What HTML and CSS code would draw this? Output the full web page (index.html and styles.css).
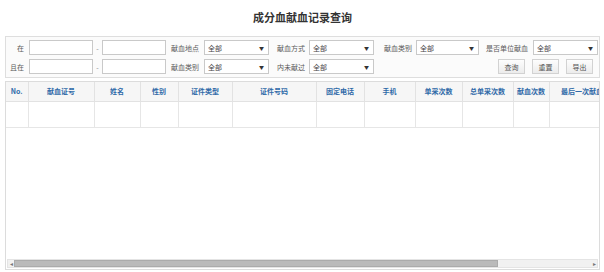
FILE: index.html
```html
<html lang="zh-CN">
<head>
    <meta charset="UTF-8">
    <title>成分血献血记录查询</title>
    <link rel="stylesheet" href="styles.css">
</head>
<body>

    <h2 class="title">成分血献血记录查询</h2>

    <!-- search form -->
    <div class="search">
        <div class="row">
            <span class="lbl first">在</span>
            <input type="text" class="date">
            <span class="dash">-</span>
            <input type="text" class="date">
            <span class="lbl l1">献血地点</span>
            <span class="sel"><select><option>全部</option></select></span>
            <span class="lbl l2">献血方式</span>
            <span class="sel"><select><option>全部</option></select></span>
            <span class="lbl l3">献血类别</span>
            <span class="sel s3"><select><option>全部</option></select></span>
            <span class="lbl l4">是否单位献血</span>
            <span class="sel"><select><option>全部</option></select></span>
        </div>
        <div class="row">
            <span class="lbl first">且在</span>
            <input type="text" class="date">
            <span class="dash">-</span>
            <input type="text" class="date">
            <span class="lbl l1">献血类别</span>
            <span class="sel"><select><option>全部</option></select></span>
            <span class="lbl l2">内未献过</span>
            <span class="sel"><select><option>全部</option></select></span>
            <div class="btns">
                <button>查询</button>
                <button>重置</button>
                <button>导出</button>
            </div>
        </div>
    </div>

    <!-- result grid -->
    <div class="grid">
        <div class="view">
            <table>
                <tr>
                    <th style="width:22px">No.</th>
                    <th style="width:66px">献血证号</th>
                    <th style="width:46px">姓名</th>
                    <th style="width:38px">性别</th>
                    <th style="width:54px">证件类型</th>
                    <th style="width:84px">证件号码</th>
                    <th style="width:48px">固定电话</th>
                    <th style="width:51px">手机</th>
                    <th style="width:47px">单采次数</th>
                    <th style="width:51px">总单采次数</th>
                    <th style="width:36px">献血次数</th>
                    <th style="width:80px">最后一次献血时间</th>
                    <th style="width:70px">备注</th>
                </tr>
                <tr>
                    <td></td><td></td><td></td><td></td><td></td><td></td><td></td>
                    <td></td><td></td><td></td><td></td><td></td><td></td>
                </tr>
            </table>
        </div>
        <div class="hbar">
            <span class="arrow">◂</span>
            <div class="track"><div class="thumb"></div></div>
            <span class="arrow">▸</span>
        </div>
    </div>

</body>
</html>
```

FILE: styles.css
```css
* {
    font-family: "Noto Sans CJK SC", "Liberation Sans", sans-serif;
    box-sizing: border-box;
}

body {
    margin: 0;
    padding: 0 4px 0 5px;
    background: #fff;
    color: #555;
}

.title {
    margin: 0;
    height: 36px;
    line-height: 34px;
    text-align: center;
    font-size: 11px;
    font-weight: bold;
    color: #333;
}

.search {
    border: 1px solid #dedede;
    background: #fbfbfb;
    padding: 1px 0 1px 1px;
    width: 595px;
}

.row {
    display: flex;
    align-items: center;
    height: 19px;
}

.lbl {
    font-size: 7px;
    color: #5a5a5a;
    white-space: nowrap;
}

.first {
    width: 22px;
    text-align: right;
    padding-right: 5px;
}

.l1 { width: 38px; padding-left: 5px; }
.l2 { width: 40px; padding-left: 8px; }
.l3 { width: 42px; padding-left: 10px; }
.l4 { width: 54px; padding-left: 7px; }

input.date {
    width: 64px;
    height: 15px;
    border: 1px solid #c9c9c9;
    background: #fff;
    padding: 0;
}

.dash {
    width: 9px;
    text-align: center;
    font-size: 7px;
    color: #888;
}

.sel {
    position: relative;
    width: 65px;
    height: 15px;
}

.s3 {
    width: 63px;
}

.sel select {
    appearance: none;
    -webkit-appearance: none;
    width: 100%;
    height: 15px;
    border: 1px solid #c9c9c9;
    background: #fff;
    font-size: 7px;
    color: #444;
    padding: 0 0 0 3px;
    border-radius: 0;
}

.sel::after {
    content: "▼";
    position: absolute;
    right: 5px;
    top: 4px;
    font-size: 5px;
    color: #333;
    pointer-events: none;
}

.btns {
    display: flex;
    margin-left: auto;
    margin-right: 6px;
}

.btns button {
    width: 27px;
    height: 15px;
    margin-left: 7px;
    border: 1px solid #d2d2d2;
    background: linear-gradient(#fdfdfd, #ececec);
    font-size: 7px;
    color: #555;
    padding: 0;
}

.grid {
    display: flex;
    flex-direction: column;
    margin-top: 3px;
    width: 595px;
    height: 189px;
    border: 1px solid #dcdcdc;
}

.view {
    flex: 1;
    overflow: hidden;
}

table {
    border-collapse: collapse;
    table-layout: fixed;
    width: 693px;
}

th {
    height: 19px;
    background: #f6f6f6;
    border: 1px solid #e2e2e2;
    border-top: none;
    font-size: 7px;
    font-weight: bold;
    color: #2f6aa8;
    white-space: nowrap;
    overflow: hidden;
    padding: 0;
}

td {
    height: 26px;
    border: 1px solid #e6e6e6;
}

th:first-child, td:first-child {
    border-left: none;
}

.hbar {
    display: flex;
    height: 9px;
    margin: 0 1px 1px 1px;
    background: #f1f1f1;
    border: 1px solid #e4e4e4;
}

.arrow {
    width: 6px;
    font-size: 6px;
    line-height: 7px;
    text-align: center;
    color: #777;
}

.track {
    flex: 1;
    display: flex;
}

.thumb {
    width: 484px;
    background: #bababa;
    border: 1px solid #ababab;
}
```
